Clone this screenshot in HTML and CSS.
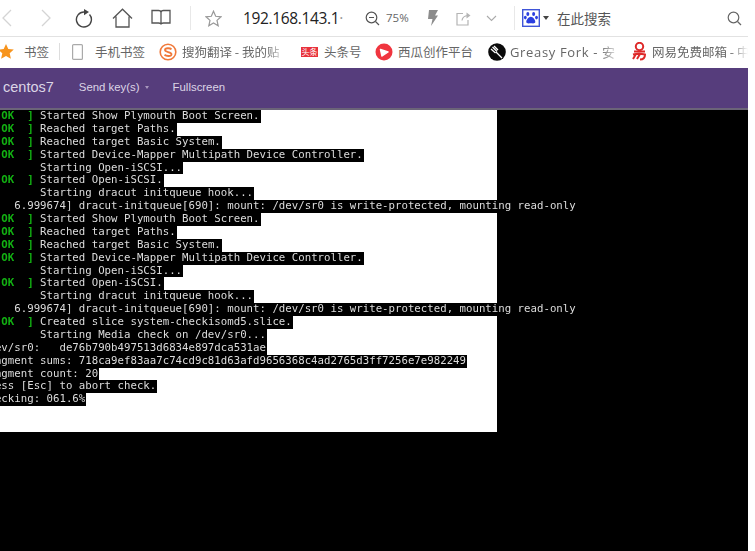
FILE: index.html
```html
<!DOCTYPE html>
<html lang="zh">
<head>
<meta charset="utf-8">
<title>centos7</title>
<link rel="stylesheet" href="styles.css">
</head>
<body>
<div class="page">
  <header class="toolbar">
    <svg class="ic back" width="11" height="18" viewBox="0 0 11 18"><path d="M10 1 2 9l8 8" fill="none" stroke="#d4d4d4" stroke-width="1.3"/></svg>
    <svg class="ic forward" width="11" height="18" viewBox="0 0 11 18"><path d="M1 1l8 8-8 8" fill="none" stroke="#d4d4d4" stroke-width="1.3"/></svg>
    <svg class="ic reload" width="19" height="19" viewBox="0 0 19 19"><path d="M14.500 5.500A7.500 7.500 0 1 1 9 3" fill="none" stroke="#444" stroke-width="1.400"/><path d="M9 0 14 3 9 6.200z" fill="#444"/></svg>
    <svg class="ic home" width="21" height="20" viewBox="0 0 21 20"><path d="M1 10.500 10.500 1.200 20 10.500M4 8.500V19h13V8.500" fill="none" stroke="#555" stroke-width="1.300"/></svg>
    <svg class="ic book" width="20" height="18" viewBox="0 0 20 18"><path d="M1 1.500h6.500q2.500 0 2.500 2v12q0-1.500-2.500-1.500H1zM19 1.500h-6.500q-2.500 0-2.500 2v12q0-1.500 2.500-1.500H19z" fill="none" stroke="#555" stroke-width="1.300"/></svg>
    <span class="vsep sep-a"></span>
    <svg class="ic fav" width="17" height="17" viewBox="0 0 17 17"><path d="M8.500 1.200 10.700 6.300 16 6.800 12 10.400 13.200 15.800 8.500 13 3.800 15.800 5 10.400 1 6.800 6.300 6.300z" fill="none" stroke="#999" stroke-width="1.200"/></svg>
    <span class="url">192.168.143.1<span class="url-cut">·</span></span>
    <svg class="ic zoom" width="15" height="15" viewBox="0 0 15 15"><circle cx="6.500" cy="6.500" r="5.300" fill="none" stroke="#555" stroke-width="1.200"/><path d="M4 6.500h5M10.500 10.500 14 14" stroke="#555" stroke-width="1.200"/></svg>
    <span class="pct">75%</span>
    <svg class="ic bolt" width="11" height="16" viewBox="0 0 11 16"><path d="M2 0h9L8 5.500h3L4 16l1.500-7H1z" fill="#8c8c8c"/></svg>
    <svg class="ic share" width="15" height="15" viewBox="0 0 15 15"><path d="M7 2.500H1v11.500h11V9M6 9.500Q6.500 5 12 4.500" fill="none" stroke="#b4b4b4" stroke-width="1.200"/><path d="M10.500 1.500 14.500 4.500 10.500 7.500z" fill="#b4b4b4"/></svg>
    <svg class="ic more" width="11" height="7" viewBox="0 0 11 7"><path d="M1 1l4.500 4.500L10 1" fill="none" stroke="#aaa" stroke-width="1.100"/></svg>
    <span class="vsep sep-b"></span>
    <svg class="ic paw" width="18" height="18" viewBox="0 0 18 18"><rect x=".7" y=".7" width="16.600" height="16.600" fill="#fff" stroke="#3f55d8" stroke-width="1.400"/><g fill="#2b3fe0"><ellipse cx="5.800" cy="5" rx="1.500" ry="2"/><ellipse cx="11.600" cy="5" rx="1.500" ry="2"/><ellipse cx="3.300" cy="8.600" rx="1.400" ry="1.800"/><ellipse cx="14.500" cy="8.600" rx="1.400" ry="1.800"/><path d="M8.800 7.800c2 0 4.700 3.200 4.500 5.300-.2 1.800-2.800 1.200-4.500 1.200s-4.300.6-4.500-1.200C4.100 11 6.800 7.800 8.800 7.800z"/></g></svg>
    <span class="caret"></span>
    <span class="search-text">在此搜索</span>
    <svg class="ic find" width="15" height="15" viewBox="0 0 15 15"><circle cx="6.500" cy="6.500" r="5.300" fill="none" stroke="#666" stroke-width="1.200"/><path d="M10.500 10.500 14 14" stroke="#666" stroke-width="1.200"/></svg>
  </header>

  <nav class="bookmarks">
    <svg class="bm-star" width="16" height="15" viewBox="0 0 16 15"><path d="M8 0 10.300 5 15.800 5.600 11.700 9.300 12.900 14.800 8 12 3.100 14.800 4.300 9.300.2 5.600 5.700 5z" fill="#f7941d"/></svg>
    <span class="bm-label label-a">书签</span>
    <span class="vsep sep-c"></span>
    <svg class="bm-phone" width="11" height="16" viewBox="0 0 11 16"><rect x=".6" y=".6" width="9.800" height="14.800" rx="1" fill="none" stroke="#aaa" stroke-width="1.200"/></svg>
    <span class="bm-label label-b">手机书签</span>
    <svg class="bm-sogou" width="18" height="18" viewBox="0 0 18 18"><circle cx="9" cy="9" r="7.800" fill="#fff" stroke="#f0793a" stroke-width="1.600"/><path d="M12.500 6.300C11 4.800 6 4.800 6 7c0 2.500 6.500 1.500 6.500 4.200 0 2.300-5 2.300-7 .6" fill="none" stroke="#f0793a" stroke-width="1.800"/></svg>
    <span class="bm-label label-c fade">搜狗翻译 - 我的贴</span>
    <span class="bm-toutiao">头条</span>
    <span class="bm-label label-d">头条号</span>
    <svg class="bm-melon" width="18" height="18" viewBox="0 0 18 18"><circle cx="9" cy="9" r="8.500" fill="#f0353f"/><path d="M5.500 6.500 13 9 7 13z" fill="#fff" stroke="#fff" stroke-linejoin="round" stroke-width="1.500"/></svg>
    <span class="bm-label label-e">西瓜创作平台</span>
    <svg class="bm-fork" width="18" height="18" viewBox="0 0 18 18"><circle cx="9" cy="9" r="8.800" fill="#0a0a0a"/><path d="M4.500 4 9 8.500M6 3 10 7M3 6 7.500 10M8 9l6 6" stroke="#fff" stroke-width="1.300"/></svg>
    <span class="bm-label label-f fade">Greasy Fork - 安</span>
    <svg class="bm-mail" width="17" height="19" viewBox="0 0 17 19"><circle cx="8.500" cy="4.500" r="3.700" fill="none" stroke="#de2a2a" stroke-width="2"/><path d="M3 9.500h11M2 12.500c4-1 8-1 12 0 0 3-2 5-5 5M5 12l-3 5M9 12l-3 5" fill="none" stroke="#de2a2a" stroke-width="2"/></svg>
    <span class="bm-label label-g fade">网易免费邮箱 - 中</span>
  </nav>

  <div class="app-nav">
    <span class="brand">centos7</span>
    <span class="nav-link">Send key(s)<i class="nav-caret"></i></span>
    <span class="nav-link">Fullscreen</span>
  </div>
  <div class="nav-edge"></div>

  <main class="console">
    <div class="canvas">
      <div class="line"><span><b>[  OK  ]</b> Started Show Plymouth Boot Screen.</span></div>
      <div class="line"><span><b>[  OK  ]</b> Reached target Paths.</span></div>
      <div class="line"><span><b>[  OK  ]</b> Reached target Basic System.</span></div>
      <div class="line"><span><b>[  OK  ]</b> Started Device-Mapper Multipath Device Controller.</span></div>
      <div class="line"><span>         Starting Open-iSCSI...</span></div>
      <div class="line"><span><b>[  OK  ]</b> Started Open-iSCSI.</span></div>
      <div class="line"><span>         Starting dracut initqueue hook...</span></div>
      <div class="line"><span>[    6.999674] dracut-initqueue[690]: mount: /dev/sr0 is write-protected, mounting read-only</span></div>
      <div class="line"><span><b>[  OK  ]</b> Started Show Plymouth Boot Screen.</span></div>
      <div class="line"><span><b>[  OK  ]</b> Reached target Paths.</span></div>
      <div class="line"><span><b>[  OK  ]</b> Reached target Basic System.</span></div>
      <div class="line"><span><b>[  OK  ]</b> Started Device-Mapper Multipath Device Controller.</span></div>
      <div class="line"><span>         Starting Open-iSCSI...</span></div>
      <div class="line"><span><b>[  OK  ]</b> Started Open-iSCSI.</span></div>
      <div class="line"><span>         Starting dracut initqueue hook...</span></div>
      <div class="line"><span>[    6.999674] dracut-initqueue[690]: mount: /dev/sr0 is write-protected, mounting read-only</span></div>
      <div class="line"><span><b>[  OK  ]</b> Created slice system-checkisomd5.slice.</span></div>
      <div class="line"><span>         Starting Media check on /dev/sr0...</span></div>
      <div class="line"><span>/dev/sr0:   de76b790b497513d6834e897dca531ae</span></div>
      <div class="line"><span>Fragment sums: 718ca9ef83aa7c74cd9c81d63afd9656368c4ad2765d3ff7256e7e982249</span></div>
      <div class="line"><span>Fragment count: 20</span></div>
      <div class="line"><span>Press [Esc] to abort check.</span></div>
      <div class="line"><span>Checking: 061.6%</span></div>
    </div>
  </main>
</div>
</body>
</html>
```
FILE: styles.css
```css
* { box-sizing: border-box; }
html, body { margin: 0; height: 100%; background: #fff; overflow: hidden; }
body { font-family: "Noto Sans", "Noto Sans CJK SC", sans-serif; }
.page { width: 748px; height: 551px; display: flex; flex-direction: column; overflow: hidden; }

.toolbar { height: 37px; flex: none; display: flex; align-items: center; border-bottom: 1px solid #e2e2e2; background: #fff; }
.ic { flex: none; }
.back { margin-left: 1px; }
.forward { margin-left: 29px; }
.reload { margin-left: 23px; }
.home { margin-left: 18px; }
.book { margin-left: 18px; }
.vsep { flex: none; width: 1px; background: #e8e8e8; }
.sep-a { height: 24px; margin-left: 19px; }
.fav { margin-left: 14px; }
.url { margin-left: 21px; width: 107px; font: 15.500px/20px "Open Sans", sans-serif; color: #222; white-space: nowrap; letter-spacing: -.35px; }
.url-cut { color: #999; }
.zoom { margin-left: 15px; }
.pct { margin-left: 6px; width: 24px; font: 11.500px/16px "Open Sans", sans-serif; color: #666; }
.bolt { margin-left: 17px; }
.share { margin-left: 18px; }
.more { margin-left: 15px; }
.sep-b { height: 24px; margin-left: 17px; }
.paw { margin-left: 7px; }
.caret { flex: none; margin-left: 3px; border: 3px solid transparent; border-top: 4px solid #444; border-bottom: 0; }
.search-text { margin-left: 8px; font: 13.500px/20px "Noto Sans CJK SC", sans-serif; color: #555; }
.find { margin-left: auto; margin-right: 6px; }

.bookmarks { height: 31px; padding-bottom: 2px; flex: none; display: flex; align-items: center; background: #fff; overflow: hidden; }
.bm-label { flex: none; font: 12.500px/18px "Noto Sans CJK SC", sans-serif; color: #666; white-space: nowrap; overflow: hidden; }
.fade { -webkit-mask-image: linear-gradient(to right, #000 82%, transparent); mask-image: linear-gradient(to right, #000 82%, transparent); }
.bm-star { flex: none; margin-left: -2px; }
.label-a { margin-left: 10px; width: 26px; }
.sep-c { height: 17px; margin-left: 9px; background: #ddd; }
.bm-phone { flex: none; margin-left: 12px; }
.label-b { margin-left: 12px; width: 52px; }
.bm-sogou { flex: none; margin-left: 12px; }
.label-c { margin-left: 5px; width: 104px; }
.bm-toutiao { flex: none; margin-left: 15px; width: 17px; height: 10px; background: #e8323c; color: #fff; font: 8px/10px "Noto Sans CJK SC", sans-serif; text-align: center; }
.label-d { margin-left: 6px; width: 39px; }
.bm-melon { flex: none; margin-left: 12px; }
.label-e { margin-left: 5px; width: 78px; }
.bm-fork { flex: none; margin-left: 12px; }
.label-f { margin-left: 4px; width: 110px; font-family: "Open Sans", "Noto Sans CJK SC", sans-serif; font-size: 13px; letter-spacing: .65px; }
.bm-mail { flex: none; margin-left: 11px; }
.label-g { margin-left: 4px; width: 96px; }

.app-nav { height: 40px; padding-bottom: 2px; flex: none; display: flex; align-items: center; background: #563d7c; color: #dcd5e6; }
.brand { margin-left: 3px; font: 14.500px/20px "Liberation Sans", sans-serif; }
.nav-link { margin-left: 25px; font: 11.400px/16px "Liberation Sans", sans-serif; }
.nav-link + .nav-link { margin-left: 24px; }
.nav-caret { display: inline-block; margin-left: 5px; vertical-align: middle; border: 2.500px solid transparent; border-top: 3px solid #a898bd; border-bottom: 0; }
.nav-edge { height: 2px; flex: none; background: #6b6478; }

.console { flex: 1; background: #000; min-height: 0; }
.canvas { width: 497px; height: 322px; background: #fff; filter: blur(.4px); }
.line { height: 12.880px; margin-left: -18px; font: 10.720px/12.880px "DejaVu Sans Mono", monospace; color: #dcdcdc; white-space: pre; }
.line span { display: inline-block; height: 12.880px; background: #000; padding-right: 1px; }
.line b { font-weight: 700; color: #12b012; }
```
